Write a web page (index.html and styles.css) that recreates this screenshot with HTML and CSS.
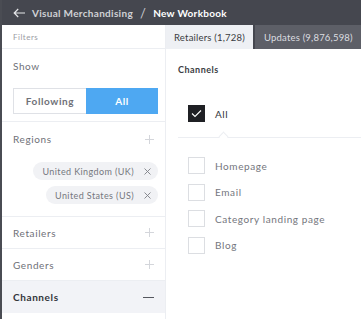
FILE: index.html
```html
<!DOCTYPE html>
<html>
<head>
<meta charset="utf-8">
<link rel="stylesheet" href="styles.css">
</head>
<body>
<div class="app">
  <header class="topbar">
    <svg class="back" width="12" height="10" viewBox="0 0 12 10"><path d="M12 5H1.2M5.2 1L1.2 5l4 4" fill="none" stroke="#e6e7ea" stroke-width="1.2"/></svg>
    <span class="crumb">Visual Merchandising</span>
    <span class="slash">/</span>
    <span class="title">New Workbook</span>
  </header>
  <div class="main">
    <aside class="filters">
      <div class="filters-head">Filters</div>
      <div class="block show">
        <div class="label">Show</div>
        <div class="segment">
          <span class="seg">Following</span>
          <span class="seg active">All</span>
        </div>
      </div>
      <div class="block regions">
        <div class="row"><span class="label">Regions</span><span class="plus"></span></div>
        <div class="chips">
          <span class="chip">United Kingdom (UK)<svg class="x" width="7" height="7" viewBox="0 0 7 7"><path d="M0.5 0.5l6 6M6.5 0.5l-6 6" stroke="#7d7f86" stroke-width="0.9"/></svg></span>
          <span class="chip">United States (US)<svg class="x" width="7" height="7" viewBox="0 0 7 7"><path d="M0.5 0.5l6 6M6.5 0.5l-6 6" stroke="#7d7f86" stroke-width="0.9"/></svg></span>
        </div>
      </div>
      <div class="block row-only"><span class="label">Retailers</span><span class="plus"></span></div>
      <div class="block row-only"><span class="label">Genders</span><span class="plus"></span></div>
      <div class="block row-only selected"><span class="label">Channels</span><span class="minus"></span></div>
    </aside>
    <section class="content">
      <nav class="tabs">
        <span class="tab current">Retailers (1,728)</span>
        <span class="tab">Updates (9,876,598)</span>
      </nav>
      <div class="panel">
        <div class="panel-title">Channels</div>
        <div class="check all"><span class="box checked"><svg width="11" height="9" viewBox="0 0 11 9"><path d="M1 4.5l3 3L10 1.5" fill="none" stroke="#fff" stroke-width="1.1"/></svg></span><span class="ctext">All</span></div>
        <div class="divider"><span class="notch"></span></div>
        <div class="list">
          <div class="check"><span class="box"></span><span class="ctext">Homepage</span></div>
          <div class="check"><span class="box"></span><span class="ctext">Email</span></div>
          <div class="check"><span class="box"></span><span class="ctext">Category landing page</span></div>
          <div class="check"><span class="box"></span><span class="ctext">Blog</span></div>
        </div>
      </div>
    </section>
  </div>
</div>
</body>
</html>
```
FILE: styles.css
```css
* { box-sizing: border-box; }
html, body { margin: 0; padding: 0; }
body {
  font-family: Lato, "Noto Sans", sans-serif;
  background: #fff;
  width: 361px;
  height: 319px;
  overflow: hidden;
}
.app {
  height: 319px;
  border-left: 2px solid #4a4c53;
  display: flex;
  flex-direction: column;
}
.topbar {
  height: 25px;
  background: #45474f;
  display: flex;
  align-items: center;
  padding-left: 11px;
  color: #c9cacf;
  font-size: 10px;
  font-weight: 700;
  letter-spacing: 0.3px;
  white-space: nowrap;
}
.back { margin-right: 7px; }
.crumb { color: #d0d1d5; }
.slash { margin: 0 7px; font-weight: 400; font-size: 13px; color: #c9cacf; }
.title { color: #fff; }
.main {
  flex: 1;
  display: grid;
  grid-template-columns: 164px 1fr;
}
.filters {
  border-right: 1px solid #eceef2;
  display: flex;
  flex-direction: column;
}
.filters-head {
  height: 24px;
  border-bottom: 1px solid #eceef2;
  font-size: 8px;
  color: #9a9ca3;
  letter-spacing: 0.5px;
  padding-left: 11px;
  display: flex;
  align-items: center;
}
.label {
  font-size: 10px;
  color: #6f7178;
  letter-spacing: 0.6px;
}
.block { border-bottom: 1px solid #eceef2; }
.show { padding: 10px 7px 7px 11px; height: 73px; }
.show .label { display: block; height: 14px; line-height: 14px; }
.segment {
  margin-top: 15px;
  display: flex;
  height: 26px;
  border: 1px solid #dfe1e6;
}
.seg {
  flex: 1;
  display: flex;
  align-items: center;
  justify-content: center;
  font-size: 10px;
  font-weight: 700;
  color: #6f7178;
  letter-spacing: 0.6px;
}
.seg.active { background: #4ea8f2; color: #fff; margin: -1px -1px -1px 0; }
.regions { padding: 0 7px 12px 11px; }
.row, .row-only {
  display: flex;
  align-items: center;
  justify-content: space-between;
}
.row { height: 34px; padding-right: 4px; }
.row-only { height: 32px; padding: 0 11px 0 11px; }
.plus, .minus {
  width: 9px; height: 9px; position: relative;
}
.plus::before, .plus::after, .minus::before {
  content: ""; position: absolute; background: #d4d6db;
}
.plus::before { left: 0; right: 0; top: 4px; height: 1px; }
.plus::after { top: 0; bottom: 0; left: 4px; width: 1px; }
.minus { width: 11px; }
.minus::before { left: 0; right: 0; top: 4px; height: 1.5px; background: #55575e; }
.chips {
  display: flex;
  flex-direction: column;
  align-items: flex-end;
  gap: 6px;
  margin-top: 6px;
}
.chip {
  height: 18px;
  border-radius: 9px;
  background: #f1f2f5;
  font-size: 9px;
  color: #75777e;
  letter-spacing: 0.4px;
  display: flex;
  align-items: center;
  padding: 0 7px 0 9px;
  white-space: nowrap;
}
.chip .x { margin-left: 10px; }
.selected { background: #f2f3f7; border-bottom: none; }
.selected .label { color: #33353b; font-weight: 700; }
.content { display: flex; flex-direction: column; min-width: 0; }
.tabs {
  height: 24px;
  background: #45474f;
  display: flex;
  gap: 2px;
  white-space: nowrap;
}
.tab {
  flex-shrink: 0;
  display: flex;
  align-items: center;
  padding: 0 8px 0 9px;
  font-size: 9.5px;
  background: #5d5f67;
  color: #dcdde0;
  letter-spacing: 0.2px;
}
.tab.current { background: #eef0f4; color: #3a3c42; padding: 0 8px; }
.panel { padding: 0 0 0 12px; flex: 1; }
.panel-title {
  font-size: 9px;
  font-weight: 700;
  color: #3b3d43;
  letter-spacing: 0.5px;
  margin-top: 15px;
  height: 12px;
  line-height: 12px;
}
.check { display: flex; align-items: center; height: 17px; }
.check.all { margin-top: 29px; padding-left: 10px; }
.box {
  width: 17px; height: 17px;
  border: 1px solid #dcdee2;
  display: flex; align-items: center; justify-content: center;
}
.box.checked { background: #1f2024; border-color: #1f2024; }
.ctext {
  margin-left: 10px;
  font-size: 10px;
  color: #74767d;
  letter-spacing: 0.6px;
  white-space: nowrap;
}
.all .ctext { color: #33353b; }
.divider {
  margin-top: 15px;
  height: 1px;
  background: #eceef2;
  position: relative;
}
.notch {
  position: absolute;
  left: 42px; top: -4px;
  width: 7px; height: 7px;
  background: #fff;
  border-left: 1px solid #eceef2;
  border-top: 1px solid #eceef2;
  transform: rotate(45deg);
}
.list {
  margin-top: 19px;
  padding-left: 10px;
  display: flex;
  flex-direction: column;
  gap: 9.5px;
}
```
